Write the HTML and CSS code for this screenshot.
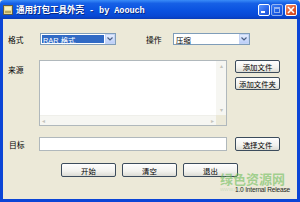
FILE: index.html
```html
<!DOCTYPE html>
<html>
<head>
<meta charset="utf-8">
<link rel="stylesheet" href="styles.css">
</head>
<body>
<div class="window">
  <div class="titlebar">
    <svg class="appicon" width="10" height="10" viewBox="0 0 10 10"><rect x="0.5" y="0.5" width="9" height="9" fill="#e8d890" stroke="#5a5a4a"/><rect x="2" y="2" width="6" height="3" fill="#f8f0c0"/><rect x="2" y="6" width="6" height="2" fill="#b8a860"/></svg>
    <span class="title">通用打包工具外壳 - by Aoouch</span>
    <div class="tbtns">
      <span class="tb min"><i></i></span>
      <span class="tb max"><i></i></span>
      <span class="tb close"><svg width="8" height="8" viewBox="0 0 8 8"><path d="M1 1L7 7M7 1L1 7" stroke="#fff" stroke-width="1.6"/></svg></span>
    </div>
  </div>
  <div class="client">
    <div class="row r1">
      <span class="lbl">格式</span>
      <div class="combo c1"><span class="val sel">RAR 格式</span><span class="arrow"><svg width="6" height="4" viewBox="0 0 6 4"><path d="M0.5 0.5L3 3L5.5 0.5" fill="none" stroke="#4d6185" stroke-width="1.2"/></svg></span></div>
      <span class="lbl lbl2">操作</span>
      <div class="combo c2"><span class="val">压缩</span><span class="arrow"><svg width="6" height="4" viewBox="0 0 6 4"><path d="M0.5 0.5L3 3L5.5 0.5" fill="none" stroke="#4d6185" stroke-width="1.2"/></svg></span></div>
    </div>
    <div class="row r2">
      <span class="lbl lbl-top">来源</span>
      <div class="listbox">
        <div class="lb-area"></div>
        <div class="vscroll"><span class="sa">&#9652;</span><span class="sa">&#9662;</span></div>
        <div class="hscroll"><span class="sa">&#9666;</span><span class="sa">&#9656;</span></div>
        <div class="corner"></div>
      </div>
      <div class="btncol">
        <span class="btn side">添加文件</span>
        <span class="btn side">添加文件夹</span>
      </div>
    </div>
    <div class="row r3">
      <span class="lbl">目标</span>
      <div class="textbox"></div>
      <span class="btn side">选择文件</span>
    </div>
    <div class="row r4">
      <span class="btn wide">开始</span>
      <span class="btn wide">清空</span>
      <span class="btn wide">退出</span>
    </div>
    <div class="footer">1.0 Internal Release</div>
    <div class="watermark">绿色资源网<span class="wm-url">www.downcc.com</span></div>
  </div>
</div>
</body>
</html>
```
FILE: styles.css
```css
* { box-sizing: border-box; }
html, body { margin: 0; padding: 0; }
body {
  width: 300px;
  height: 202px;
  overflow: hidden;
  font-family: "Liberation Sans", "Noto Sans CJK SC", sans-serif;
  background: #ece9d8;
}
.window {
  width: 300px;
  height: 202px;
  display: flex;
  flex-direction: column;
}
.titlebar {
  height: 19px;
  flex: none;
  display: flex;
  align-items: center;
  padding-left: 3px;
  background: linear-gradient(to bottom, #3a8cf8 0%, #1660e6 18%, #0a52e0 55%, #0848d4 85%, #0a3cb8 100%);
  border-radius: 4px 4px 0 0;
}
.appicon { flex: none; }
.title {
  margin-left: 3px;
  color: #fff;
  font-family: "Liberation Mono", "Noto Sans CJK SC", monospace;
  font-weight: bold;
  font-size: 8.6px;
  letter-spacing: -0.1px;
  text-shadow: 1px 1px 0 #0a2a80;
  white-space: nowrap;
}
.tbtns {
  margin-left: auto;
  margin-right: 3px;
  display: flex;
  gap: 1px;
}
.tb {
  width: 12px;
  height: 12px;
  border: 1px solid #fff;
  border-radius: 2px;
  background: linear-gradient(135deg, #5b96ff, #2a64e8 60%, #1b4ed0);
  display: flex;
  align-items: center;
  justify-content: center;
  position: relative;
}
.tb.min i { display: block; width: 4px; height: 2px; background: #fff; margin-top: 5px; margin-right: 2px; }
.tb.max { opacity: 0.55; }
.tb.max i { display: block; width: 6px; height: 6px; border: 1px solid #fff; border-top-width: 2px; }
.tb.close { background: linear-gradient(135deg, #f0906c, #e0562c 60%, #c8401e); margin-left: 1px; }

.client {
  flex: 1;
  position: relative;
  border-left: 3px solid #0b45d6;
  border-right: 3px solid #0b45d6;
  border-bottom: 3px solid #0b45d6;
  background: #ece9d8;
  padding: 14px 0 0 5px;
  font-size: 7.6px;
  color: #000;
}
.row { display: flex; align-items: center; }
.lbl { width: 31px; flex: none; font-size: 7.8px; }
.lbl-top { align-self: flex-start; margin-top: 4px; }
.lbl2 { width: 27px; margin-left: 30px; }
.combo {
  height: 12px;
  border: 1px solid #7f9db9;
  background: #fff;
  display: flex;
  align-items: stretch;
}
.c1 { width: 76px; margin-left: 1px; }
.c2 { width: 77px; }
.val { flex: 1; display: flex; align-items: center; padding-left: 2px; font-size: 7.4px; }
.val.sel { background: #316ac5; color: #fff; margin: 1px; padding-left: 1px; }
.arrow {
  width: 10px;
  flex: none;
  background: linear-gradient(to bottom, #e4ecfd, #bccff8);
  border: 1px solid #c5d4f4;
  display: flex;
  align-items: center;
  justify-content: center;
}
.r2 { margin-top: 15px; align-items: flex-start; }
.listbox {
  width: 188px;
  height: 66px;
  border: 1px solid #b0b8bc;
  background: #fff;
  display: grid;
  grid-template-columns: 1fr 10px;
  grid-template-rows: 1fr 10px;
}
.lb-area { background: #fff; }
.vscroll, .hscroll {
  background: #f6f6f2;
  display: flex;
  justify-content: space-between;
  color: #c4c4bc;
  font-size: 6px;
  line-height: 1;
}
.vscroll { flex-direction: column; align-items: center; padding: 2px 0; }
.hscroll { align-items: center; padding: 0 2px; border-top: 1px solid #efefea; }
.corner { background: #ece9d8; }
.btncol {
  margin-left: 8px;
  display: flex;
  flex-direction: column;
  gap: 4px;
}
.btn {
  display: flex;
  align-items: center;
  justify-content: center;
  border: 1px solid #3c4c5c;
  border-radius: 2px;
  background: linear-gradient(to bottom, #fefefe, #f2f2ee 60%, #dcdcd4);
  font-size: 7.4px;
  flex: none;
}
.btn.side { width: 45px; height: 13px; }
.r3 { margin-top: 11px; }
.r3 .lbl { padding-left: 1px; }
.textbox {
  width: 188px;
  height: 14px;
  border: 1px solid #b0b8bc;
  background: #fff;
}
.r3 .btn.side { margin-left: 8px; height: 14px; }
.r4 { margin-top: 12px; padding-left: 53px; gap: 6px; }
.btn.wide { width: 55px; height: 14px; }
.footer {
  text-align: right;
  margin-top: 9px;
  padding-right: 7px;
  font-size: 6.6px;
  letter-spacing: -0.2px;
  color: #222;
}
.watermark {
  position: absolute;
  left: 217px;
  top: 153px;
  font-family: "Noto Sans CJK SC", sans-serif;
  font-weight: bold;
  font-size: 13px;
  line-height: 14px;
  color: rgba(110, 190, 90, 0.6);
  letter-spacing: 0px;
}
.wm-url {
  display: block;
  font-family: "Liberation Sans", sans-serif;
  font-weight: normal;
  font-size: 6px;
  line-height: 6px;
  color: rgba(150, 190, 140, 0.35);
}
```
